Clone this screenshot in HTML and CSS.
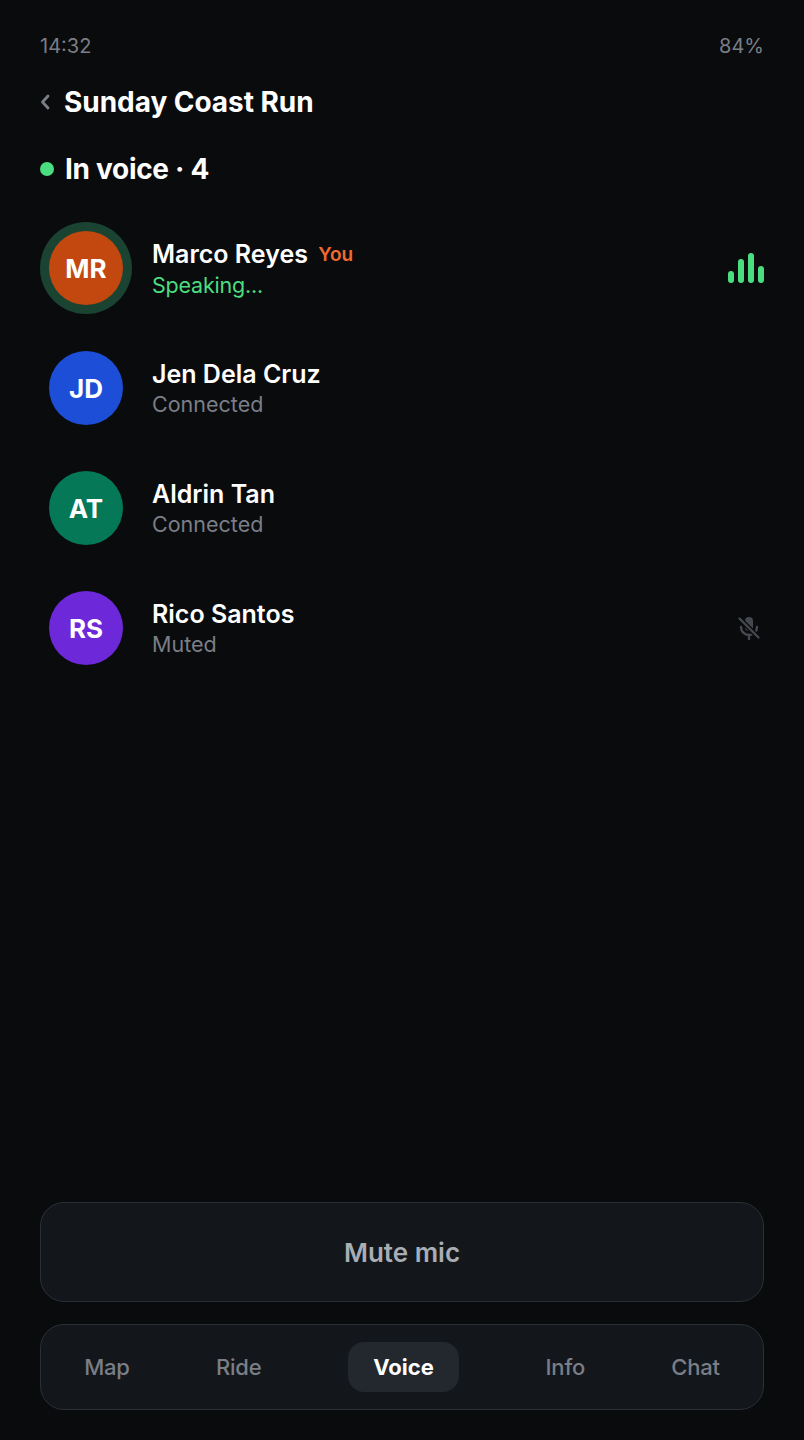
FILE: index.html
```html
<!DOCTYPE html>
<html lang="en">
<head>
  <meta charset="UTF-8" />
  <meta name="viewport" content="width=device-width, initial-scale=1" />
  <title>Sunday Coast Run - Voice</title>
  <link rel="stylesheet" href="styles.css">
</head>
<body>
  <div class="status-bar">
    <span>14:32</span>
    <span>84%</span>
  </div>

  <header class="title-row">
    <svg class="back" width="10" height="18" viewBox="0 0 10 18" aria-hidden="true">
      <path d="M8 3 2.500 9 8 15" fill="none" stroke="currentColor" stroke-width="2.800" stroke-linecap="round" stroke-linejoin="round" />
    </svg>
    <h1>Sunday Coast Run</h1>
  </header>

  <h2 class="section-title"><span class="live-dot"></span>In voice · 4</h2>

  <!-- Members -->
  <ul class="members">
    <li class="member">
      <div class="avatar-wrap speaking"><div class="avatar orange">MR</div></div>
      <div class="info">
        <div class="name">Marco Reyes <span class="you">You</span></div>
        <div class="state green">Speaking...</div>
      </div>
      <div class="bars" aria-hidden="true">
        <i class="b1"></i><i class="b2"></i><i class="b3"></i><i class="b4"></i>
      </div>
    </li>
    <li class="member">
      <div class="avatar-wrap"><div class="avatar blue">JD</div></div>
      <div class="info">
        <div class="name">Jen Dela Cruz</div>
        <div class="state">Connected</div>
      </div>
    </li>
    <li class="member">
      <div class="avatar-wrap"><div class="avatar teal">AT</div></div>
      <div class="info">
        <div class="name">Aldrin Tan</div>
        <div class="state">Connected</div>
      </div>
    </li>
    <li class="member">
      <div class="avatar-wrap"><div class="avatar purple">RS</div></div>
      <div class="info">
        <div class="name">Rico Santos</div>
        <div class="state">Muted</div>
      </div>
      <svg class="mic-off" width="28" height="28" viewBox="0 0 28 28" aria-hidden="true">
        <rect x="10" y="3" width="8" height="14" rx="4" fill="currentColor" />
        <path d="M6 13c0 4.600 3.500 8 8 8s8-3.400 8-8M14 21v4" fill="none" stroke="currentColor" stroke-width="2.400" stroke-linecap="round" />
        <path d="M4 4l20 20" fill="none" stroke="#0a0b0d" stroke-width="5" />
        <path d="M4.500 4.500l19 19" fill="none" stroke="currentColor" stroke-width="2.400" stroke-linecap="round" />
      </svg>
    </li>
  </ul>

  <div class="bottom">
    <button class="mute-btn">Mute mic</button>
    <nav class="tabs">
      <a href="#">Map</a>
      <a href="#">Ride</a>
      <a href="#" class="active">Voice</a>
      <a href="#">Info</a>
      <a href="#">Chat</a>
    </nav>
  </div>
</body>
</html>
```

FILE: styles.css
```css
* {
  margin: 0;
  padding: 0;
  box-sizing: border-box;
  font-family: 'Inter', sans-serif;
}
body {
  background: #0a0b0d;
  color: #fff;
  min-height: 100vh;
  display: flex;
  flex-direction: column;
  padding: 0 40px 30px;
}

.status-bar {
  display: flex;
  justify-content: space-between;
  padding-top: 34px;
  font-size: 20px;
  line-height: 24px;
  color: #7a7e86;
}

.title-row {
  display: flex;
  align-items: center;
  gap: 14px;
  margin-top: 26px;
  height: 36px;
}
.back {
  color: #7a7e86;
}
.title-row h1 {
  font-size: 28px;
  font-weight: 700;
  letter-spacing: -0.05px;
}

.section-title {
  display: flex;
  align-items: center;
  gap: 11px;
  margin-top: 31px;
  font-size: 28px;
  line-height: 36px;
  font-weight: 700;
  letter-spacing: -0.3px;
}
.live-dot {
  width: 14px;
  height: 14px;
  border-radius: 50%;
  background: #4ade80;
}

.members {
  list-style: none;
  margin-top: 21px;
}
.member {
  display: flex;
  align-items: center;
  height: 120px;
}
.avatar-wrap {
  width: 92px;
  height: 92px;
  border-radius: 50%;
  display: flex;
  align-items: center;
  justify-content: center;
  margin-right: 20px;
}
.avatar-wrap.speaking {
  background: #1b4332;
}
.avatar {
  width: 74px;
  height: 74px;
  border-radius: 50%;
  display: flex;
  align-items: center;
  justify-content: center;
  font-size: 26px;
  font-weight: 700;
}
.orange { background: #c2480f; }
.blue { background: #1d4ed8; }
.teal { background: #047857; }
.purple { background: #6d28d9; }

.info {
  flex: 1;
  padding-top: 1px;
}
.name {
  font-size: 25px;
  line-height: 30px;
  font-weight: 600;
}
.you {
  margin-left: 4px;
  font-size: 19px;
  font-weight: 600;
  color: #f26a2e;
  vertical-align: 2px;
}
.state {
  margin-top: 1px;
  font-size: 21.5px;
  line-height: 28px;
  color: #7a7e86;
}
.state.green {
  color: #4ade80;
  letter-spacing: -0.2px;
}

.bars {
  display: flex;
  align-items: flex-end;
  gap: 4px;
  height: 30px;
}
.bars i {
  display: block;
  width: 6px;
  border-radius: 3px;
  background: #4ade80;
}
.b1 { height: 12px; }
.b2 { height: 24px; }
.b3 { height: 30px; }
.b4 { height: 17px; }

.mic-off {
  color: #45484e;
  margin-right: 1px;
}

.bottom {
  margin-top: auto;
  display: flex;
  flex-direction: column;
  gap: 22px;
}
.mute-btn {
  height: 100px;
  background: #13171c;
  border: 1px solid #2a2f38;
  border-radius: 24px;
  color: #a9adb4;
  font-size: 26px;
  font-weight: 600;
}
.tabs {
  height: 86px;
  background: #13171c;
  border: 1px solid #2a2f38;
  border-radius: 24px;
  display: flex;
  align-items: center;
  justify-content: space-around;
}
.tabs a {
  color: #7a7e86;
  font-size: 22px;
  font-weight: 500;
  letter-spacing: -0.2px;
  text-decoration: none;
}
.tabs a.active {
  background: #23282e;
  color: #fff;
  font-weight: 700;
  letter-spacing: 0;
  padding: 12px 25.5px;
  border-radius: 16px;
}
```
